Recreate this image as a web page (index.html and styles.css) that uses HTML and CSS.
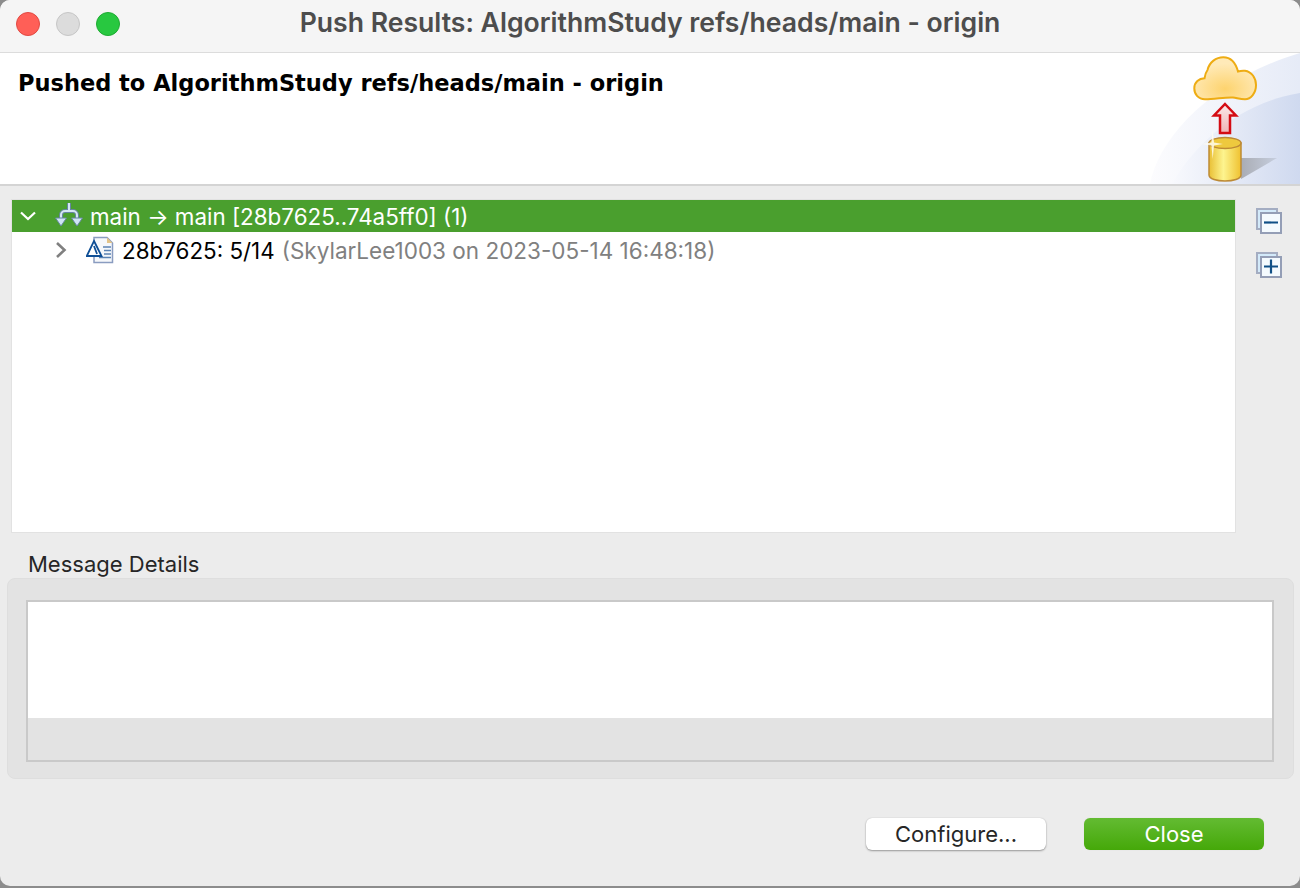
FILE: index.html
```html
<!DOCTYPE html>
<html lang="en">
<head>
    <meta charset="UTF-8">
    <title>Push Results</title>
    <link rel="stylesheet" href="styles.css">
</head>
<body>
    <div class="janela">
        <div class="barraTitulo">
            <div class="semaforo">
                <span class="bola vermelha"></span>
                <span class="bola cinza"></span>
                <span class="bola verde"></span>
            </div>
            <div class="tituloJanela">Push Results: AlgorithmStudy refs/heads/main - origin</div>
        </div>

        <div class="banner">
            <div class="bannerTexto">Pushed to AlgorithmStudy refs/heads/main - origin</div>
            <svg class="bannerArte" width="150" height="131" viewBox="0 0 150 131">
                <defs>
                    <linearGradient id="fundoA" x1="0" y1="0" x2="1" y2="0">
                        <stop offset="0" stop-color="#fcfcfe"/>
                        <stop offset="1" stop-color="#e6ebf7"/>
                    </linearGradient>
                    <linearGradient id="fundoB" x1="0" y1="0" x2="1" y2="0">
                        <stop offset="0" stop-color="#f8f9fd"/>
                        <stop offset="1" stop-color="#cfd9ef"/>
                    </linearGradient>
                    <radialGradient id="nuvem" cx="0.5" cy="0.75" r="0.6">
                        <stop offset="0" stop-color="#fdd36e"/>
                        <stop offset="1" stop-color="#ffeab8"/>
                    </radialGradient>
                    <linearGradient id="seta" x1="0" y1="0" x2="0" y2="1">
                        <stop offset="0" stop-color="#fbeaea"/>
                        <stop offset="1" stop-color="#efb4b6"/>
                    </linearGradient>
                    <linearGradient id="lata" x1="0" y1="0" x2="1" y2="0">
                        <stop offset="0" stop-color="#e9bf35"/>
                        <stop offset="0.45" stop-color="#fdf48f"/>
                        <stop offset="1" stop-color="#efc130"/>
                    </linearGradient>
                    <linearGradient id="sombra" x1="0" y1="0" x2="1" y2="0">
                        <stop offset="0" stop-color="#a9acb4"/>
                        <stop offset="1" stop-color="#c6cede"/>
                    </linearGradient>
                </defs>
                <path d="M0 131C8 86 62 26 150 0V131Z" fill="url(#fundoA)"/>
                <path d="M22 131C44 92 88 50 150 40V131Z" fill="url(#fundoB)"/>
                <path d="M91 126L127 105H91Z" fill="url(#sombra)"/>
                <path d="M55 46.300C48 46.300 44.300 41 44.300 35.300C44.300 29 49 25.500 54.500 25.300C55 22 56 19 57.500 17C59.500 9 66 4.300 73.300 4.300C80 4.300 85.500 9.500 88 18.500C90 17.800 92.500 17.500 95 17.700C101.500 18.500 106 25 106 32C106 40 101 46.300 95 46.300C90 46.300 87 45 83 44.500C75 44 65 46.300 55 46.300Z" fill="url(#nuvem)" stroke="#eeac13" stroke-width="2"/>
                <path d="M75 51L86 62.500H80V80H70V62.500H64Z" fill="url(#seta)" stroke="#d40c14" stroke-width="2.500"/>
                <path d="M59 90V122C59 130 91 130 91 122V90Z" fill="url(#lata)" stroke="#bd8a36" stroke-width="1.500"/>
                <ellipse cx="75" cy="90" rx="16" ry="5.500" fill="#eec93e" stroke="#bd8a36" stroke-width="1.500"/>
                <path d="M62.700 77L64 89.500L73 91L64 92.500L62.700 106L61.400 92.500L52 91L61.400 89.500Z" fill="#fffdf0" opacity="0.85"/>
            </svg>
        </div>

        <div class="areaTree">
            <div class="tree">
                <div class="linha selecionada">
                    <svg class="seta" width="16" height="16" viewBox="0 0 16 16"><path d="M1 4.500L8 11L15 4.500" fill="none" stroke="#fff" stroke-width="2.200"/></svg>
                    <svg class="iconeRef" width="28" height="28" viewBox="0 0 28 28">
                        <path d="M14 1V9M14 9H10A4 4 0 0 0 6 13V17M14 9H18A4 4 0 0 1 22 13V17" fill="none" stroke="#66879f" stroke-width="4"/>
                        <path d="M14 1V9M14 9H10A4 4 0 0 0 6 13V17M14 9H18A4 4 0 0 1 22 13V17" fill="none" stroke="#d5e7f4" stroke-width="2"/>
                        <path d="M.500 16H11.500L6 24ZM16.500 16H27.500L22 24Z" fill="#cfe5f5" stroke="#66879f"/>
                    </svg>
                    <span>main → main [28b7625..74a5ff0] (1)</span>
                </div>
                <div class="linha filho">
                    <svg class="seta" width="16" height="16" viewBox="0 0 16 16"><path d="M4 1L11.500 8L4 15" fill="none" stroke="#808080" stroke-width="2.600"/></svg>
                    <svg class="iconeCommit" width="28" height="28" viewBox="0 0 28 28">
                        <path d="M8 1.500H21L26.500 7V26.500H8Z" fill="#f6f8fb" stroke="#8a9cc0" stroke-width="1.500"/>
                        <path d="M21 1.500V7H26.500Z" fill="#e3c489"/>
                        <path d="M17 11H25M18 14.500H25M18 18H25M13 21.500H25" stroke="#5c83b4" stroke-width="1.300"/>
                        <path d="M8 5L15.500 20H.8Z" fill="#fff" stroke="#0f4f96" stroke-width="1.800"/>
                        <path d="M8 10L11 18" stroke="#0f4f96" stroke-width="1.800"/>
                    </svg>
                    <span>28b7625: 5/14</span>
                    <span class="autor">(SkylarLee1003 on 2023-05-14 16:48:18)</span>
                </div>
            </div>
            <div class="botoesTree">
                <svg width="28" height="28" viewBox="0 0 28 28">
                    <rect x="2" y="2" width="20" height="20" fill="#d3eafa" stroke="#a4adc2" stroke-width="2"/>
                    <rect x="6" y="6" width="20" height="20" fill="#f4fafe" stroke="#949eb6" stroke-width="2"/>
                    <path d="M9 15.500H23" stroke="#0f4f86" stroke-width="2.200"/>
                </svg>
                <svg width="28" height="28" viewBox="0 0 28 28">
                    <rect x="2" y="2" width="20" height="20" fill="#d3eafa" stroke="#a4adc2" stroke-width="2"/>
                    <rect x="6" y="6" width="20" height="20" fill="#f4fafe" stroke="#949eb6" stroke-width="2"/>
                    <path d="M9 15.500H23M16 8.500V22.500" stroke="#0f4f86" stroke-width="2.200"/>
                </svg>
            </div>
        </div>

        <div class="tituloGrupo">Message Details</div>
        <div class="grupo">
            <div class="caixaMensagem">
                <div class="mensagemBranca"></div>
            </div>
        </div>

        <div class="rodape">
            <button class="botao">Configure...</button>
            <button class="botao principal">Close</button>
        </div>
    </div>
</body>
</html>
```

FILE: styles.css
```css
html, body {
    margin: 0;
    height: 100%;
    background-color: #8c8c8c;
}
.janela {
    width: 1300px;
    height: 886px;
    box-sizing: border-box;
    background-color: #ececec;
    border-radius: 10px;
    overflow: hidden;
    font-family: "Inter", "Liberation Sans", sans-serif;
    color: #262626;
    display: flex;
    flex-direction: column;
}
.barraTitulo {
    height: 52px;
    flex-shrink: 0;
    background-color: #f5f5f5;
    border-bottom: 1px solid #dcdcdc;
    display: grid;
    grid-template-columns: 1fr auto 1fr;
    align-items: center;
    padding: 0 16px;
}
.semaforo {
    display: flex;
    gap: 16px;
    margin-top: -4px;
}
.bola {
    width: 24px;
    height: 24px;
    box-sizing: border-box;
    border-radius: 50%;
    border: 1px solid;
}
.vermelha {
    background-color: #ff5f57;
    border-color: #e14942;
}
.cinza {
    background-color: #dcdcdc;
    border-color: #c6c6c6;
}
.verde {
    background-color: #28c840;
    border-color: #1eab32;
}
.tituloJanela {
    text-align: center;
    font-size: 26.600px;
    font-weight: 600;
    color: #4d4d4d;
    margin-top: -8px;
}
.banner {
    height: 131px;
    flex-shrink: 0;
    background-color: #fff;
    border-bottom: 2px solid #d4d4d4;
    display: flex;
    justify-content: space-between;
}
.bannerTexto {
    font-family: "DejaVu Sans", sans-serif;
    font-weight: bold;
    font-size: 22.500px;
    color: #000;
    padding: 17px 0 0 18px;
}
.bannerArte {
    display: block;
}
.areaTree {
    display: flex;
    padding: 14px 7px 0 12px;
    height: 332px;
    flex-shrink: 0;
}
.tree {
    width: 1223px;
    background-color: #fff;
    box-shadow: 0 0 0 1px #e2e2e2;
    font-size: 22.400px;
    color: #000;
}
.linha {
    height: 32px;
    display: flex;
    align-items: center;
}
.selecionada {
    background-color: #4a9f2e;
    color: #fff;
    padding-left: 8px;
}
.selecionada .iconeRef {
    margin: 0 7px 0 19px;
}
.filho {
    height: 36px;
    padding-left: 41px;
}
.filho .iconeCommit {
    margin: 0 8px 0 17px;
}
.autor {
    color: #808080;
    font-size: 22.500px;
    margin-left: 7px;
}
.botoesTree {
    display: flex;
    flex-direction: column;
    gap: 16px;
    margin-left: 20px;
    padding-top: 7px;
}
.botoesTree svg {
    display: block;
}
.tituloGrupo {
    font-size: 22px;
    padding: 19px 0 0 28px;
    height: 27px;
    flex-shrink: 0;
}
.grupo {
    margin: 0 6px 0 7px;
    height: 201px;
    flex-shrink: 0;
    background-color: #e3e3e3;
    border: 1px solid #dedede;
    border-radius: 8px;
    padding: 21px 19px 17px 18px;
    box-sizing: border-box;
}
.caixaMensagem {
    height: 162px;
    box-sizing: border-box;
    border: 2px solid #c9c9c9;
    background-color: #e3e3e3;
}
.mensagemBranca {
    height: 116px;
    background-color: #fff;
}
.rodape {
    display: flex;
    justify-content: flex-end;
    gap: 38px;
    padding: 39px 36px 0 0;
}
.botao {
    width: 180px;
    height: 32px;
    border: none;
    border-radius: 6px;
    background-color: #fff;
    color: #262626;
    font-family: "Inter", "Liberation Sans", sans-serif;
    font-size: 22px;
    padding: 0;
    box-shadow: 0 1px 2px rgba(0, 0, 0, 0.35), 0 0 1px rgba(0, 0, 0, 0.2);
}
.principal {
    background: linear-gradient(#63bb32, #45a809);
    color: #fff;
    box-shadow: 0 0 1px rgba(0, 0, 0, 0.15);
}
```
